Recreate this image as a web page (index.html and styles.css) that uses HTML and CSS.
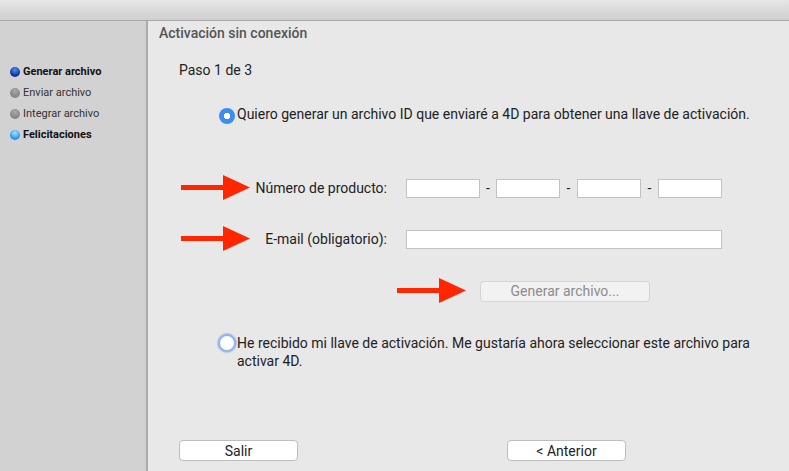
FILE: index.html
```html
<!DOCTYPE html>
<html lang="es">
<head>
    <meta charset="UTF-8">
    <meta name="viewport" content="width=device-width, initial-scale=1.0">
    <title>Activación sin conexión</title>
    <link rel="stylesheet" href="styles.css">
</head>
<body>

    <div class="titlebar"></div>

    <div class="window">
        <aside class="sidebar">
            <div class="step bold"><span class="dot dark"></span>Generar archivo</div>
            <div class="step"><span class="dot gray"></span>Enviar archivo</div>
            <div class="step"><span class="dot gray"></span>Integrar archivo</div>
            <div class="step bold"><span class="dot light"></span>Felicitaciones</div>
        </aside>

        <main class="main">
            <h1 class="title">Activación sin conexión</h1>
            <p class="paso">Paso 1 de 3</p>

            <label class="option first">
                <span class="radio checked"></span>
                <span>Quiero generar un archivo ID que enviaré a 4D para obtener una llave de activación.</span>
            </label>

            <div class="form">
                <svg class="arrow" width="70" height="26" viewBox="0 0 70 26"><rect x="0" y="10" width="44" height="5" fill="#ff2600"/><polygon points="42,0 69,12.5 42,25" fill="#ff2600"/></svg>
                <span class="label">Número de producto:</span>
                <div class="fields">
                    <input type="text" class="f1">
                    <span class="dash">-</span>
                    <input type="text" class="f2">
                    <span class="dash">-</span>
                    <input type="text" class="f2">
                    <span class="dash">-</span>
                    <input type="text" class="f2">
                </div>

                <svg class="arrow" width="70" height="26" viewBox="0 0 70 26"><rect x="0" y="10" width="44" height="5" fill="#ff2600"/><polygon points="42,0 69,12.5 42,25" fill="#ff2600"/></svg>
                <span class="label">E-mail (obligatorio):</span>
                <div class="fields">
                    <input type="text" class="email">
                </div>
            </div>

            <div class="gen-row">
                <svg class="arrow" width="70" height="26" viewBox="0 0 70 26"><rect x="0" y="10" width="44" height="5" fill="#ff2600"/><polygon points="42,0 69,12.5 42,25" fill="#ff2600"/></svg>
                <button class="gen" disabled>Generar archivo...</button>
            </div>

            <label class="option second">
                <span class="radio"></span>
                <span>He recibido mi llave de activación. Me gustaría ahora seleccionar este archivo para activar 4D.</span>
            </label>

            <div class="footer">
                <button class="btn">Salir</button>
                <button class="btn">&lt; Anterior</button>
            </div>
        </main>
    </div>

</body>
</html>
```

FILE: styles.css
```css
* {
    margin: 0;
    padding: 0;
    box-sizing: border-box;
    font-family: Roboto, "Liberation Sans", sans-serif;
}

body {
    width: 789px;
    height: 471px;
    overflow: hidden;
    background-color: #e8e8e8;
    color: #222;
    display: flex;
    flex-direction: column;
}

.titlebar {
    height: 21px;
    background: linear-gradient(#e6e6e6, #cfcfcf);
    border-bottom: 1px solid #a9a9a9;
}

.window {
    flex: 1;
    display: flex;
}

.sidebar {
    width: 148px;
    background-color: #d2d2d2;
    border-right: 2px solid #ababab;
    padding-top: 40px;
}

.step {
    display: flex;
    align-items: center;
    gap: 3px;
    height: 21px;
    padding-left: 10px;
    font-size: 11px;
    color: #333;
}

.step.bold {
    font-weight: bold;
    color: #111;
}

.dot {
    width: 10px;
    height: 10px;
    border-radius: 50%;
}

.dot.dark {
    background: radial-gradient(circle at 50% 30%, #5a8ef0, #1238a8 60%, #0a2470);
}

.dot.gray {
    background: radial-gradient(circle at 50% 30%, #a8a8a8, #8a8a8a 60%, #777);
}

.dot.light {
    background: radial-gradient(circle at 50% 30%, #a8e4ff, #2f9cf0 60%, #1a6cc0);
}

.main {
    flex: 1;
    display: flex;
    flex-direction: column;
    padding: 4px 0 10px 11px;
    font-size: 14px;
}

.title {
    font-size: 14px;
    font-weight: 500;
    color: #555;
    line-height: 16px;
}

.paso {
    line-height: 16px;
    margin: 21px 0 0 20px;
}

.option {
    display: flex;
    align-items: flex-start;
    line-height: 18px;
    margin-left: 60px;
}

.option.first {
    margin-top: 27px;
}

.option.second {
    margin-top: 30px;
    width: 545px;
    margin-left: 59px;
}

.radio {
    flex: none;
    width: 16px;
    height: 16px;
    border-radius: 50%;
    margin: 1px 2px 0 0;
    background-color: #fff;
    border: 2px solid #9cbef0;
}

.option.second .radio {
    width: 18px;
    height: 18px;
    margin: 0 1px 0 0;
    border: 2px solid #90b4ec;
    box-shadow: 0 0 1px 1px rgba(120, 160, 230, .5);
}

.radio.checked {
    background: radial-gradient(circle, #fff 0 3px, #3b8ef0 3.5px);
    border: none;
    margin-top: 3px;
}

.form {
    display: grid;
    grid-template-columns: 70px 137px auto;
    align-items: center;
    row-gap: 25px;
    margin: 51px 0 0 22px;
}

.label {
    text-align: right;
    padding-right: 1px;
}

.fields {
    display: flex;
    align-items: center;
    margin-left: 18px;
}

input {
    height: 19px;
    border: 1px solid #c2c2c2;
    background-color: #fff;
}

.f1 {
    width: 74px;
}

.f2 {
    width: 64px;
}

.dash {
    width: 17px;
    text-align: center;
}

.dash:first-of-type {
    width: 16px;
}

.email {
    width: 316px;
}

.gen-row {
    display: flex;
    align-items: center;
    gap: 13px;
    margin: 26px 0 0 238px;
}

.gen {
    width: 170px;
    height: 21px;
    border: 1px solid #d4d4d4;
    border-radius: 4px;
    background-color: #f2f2f2;
    color: #8c8c8c;
    font-size: 14px;
}

.footer {
    margin-top: auto;
    display: flex;
    gap: 209px;
    padding-left: 20px;
}

.btn {
    width: 119px;
    height: 21px;
    border: 1px solid #bdbdbd;
    border-radius: 4px;
    background-color: #fff;
    font-size: 14px;
    color: #222;
}
```
